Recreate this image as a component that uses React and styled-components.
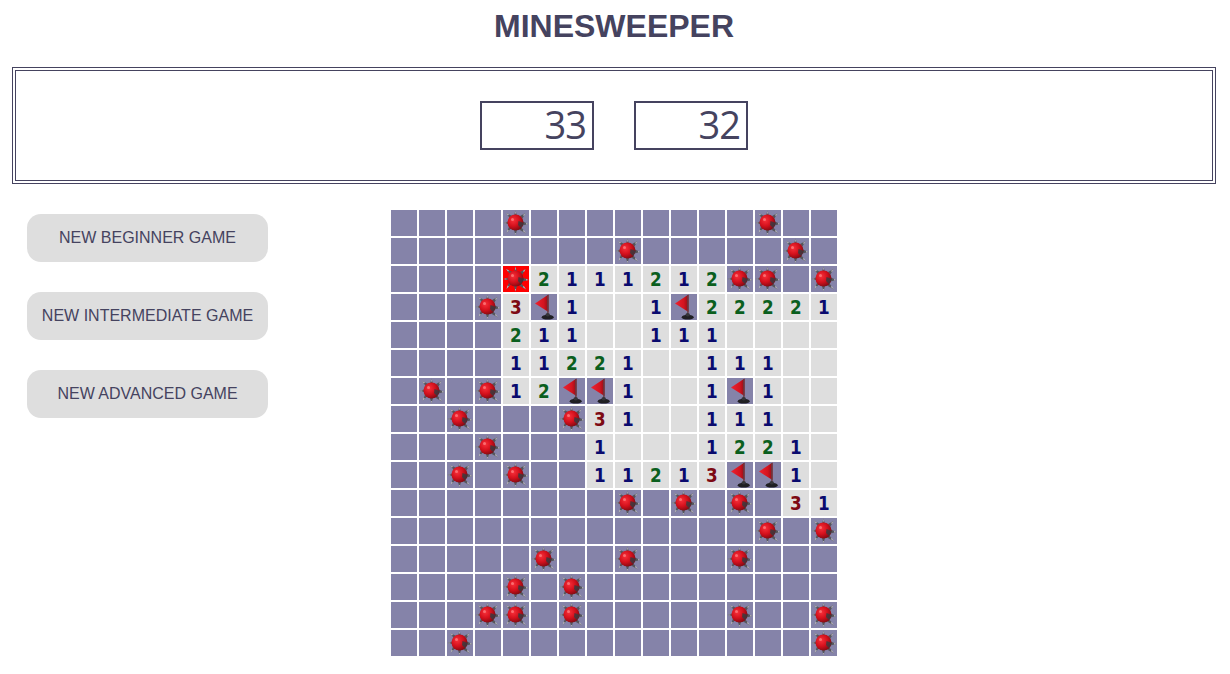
import styled, { createGlobalStyle } from 'styled-components';

const INK = '#45435f';

const GlobalStyle = createGlobalStyle`
  html, body {
    margin: 0;
    background: #fff;
    font-family: "Liberation Sans", Arial, sans-serif;
    color: ${INK};
  }
`;

const Page = styled.div`
  width: 1230px;
  height: 674px;
  overflow: hidden;
  padding: 0 14px 0 12px;
  box-sizing: border-box;
`;

const Title = styled.h1`
  margin: 0;
  height: 67px;
  padding-top: 8px;
  box-sizing: border-box;
  font-size: 32px;
  line-height: 37px;
  font-weight: bold;
  text-align: center;
  text-transform: uppercase;
`;

const ScoreBoard = styled.div`
  height: 117px;
  box-sizing: border-box;
  border: 4px double ${INK};
  display: flex;
  align-items: flex-start;
  justify-content: center;
  gap: 40px;
  padding-top: 30px;
`;

const Counter = styled.div`
  width: 114px;
  height: 49px;
  box-sizing: border-box;
  border: 2px solid ${INK};
  padding-right: 6px;
  font-family: "Open Sans", sans-serif;
  font-size: 38px;
  letter-spacing: -1px;
  line-height: 43px;
  text-align: right;
`;

const Main = styled.div`
  display: flex;
  padding: 26px 0 0 15px;
`;

const Sidebar = styled.div`
  width: 241px;
  padding-top: 4px;
  display: flex;
  flex-direction: column;
  gap: 30px;
`;

const GameButton = styled.button`
  height: 48px;
  border: 0;
  padding: 0;
  border-radius: 14px;
  background: #dedede;
  color: ${INK};
  font-family: inherit;
  font-size: 16px;
  text-transform: uppercase;
`;

const Board = styled.div`
  margin-left: 123px;
  display: grid;
  grid-template-columns: repeat(16, 26px);
  grid-auto-rows: 26px;
  gap: 2px;
`;

const numberColors = { 1: '#0a0a6e', 2: '#0b5f1e', 3: '#7d0a14' };

const Cell = styled.div`
  display: flex;
  align-items: center;
  justify-content: center;
  background: ${({ $kind }) =>
    $kind === 'exploded' ? '#fe0000' : $kind === 'open' ? '#dedede' : '#8583a9'};
`;

const Digit = styled.span`
  display: inline-block;
  transform: scaleX(0.84);
  color: ${({ $value }) => numberColors[$value] || INK};
  font-family: "DejaVu Sans", sans-serif;
  font-size: 20px;
  font-weight: bold;
  line-height: 26px;
`;

const Mine = () => (
  <svg width="26" height="26" viewBox="0 0 26 26">
    <defs>
      <radialGradient id="mineBall" cx="0.36" cy="0.36" r="0.75">
        <stop offset="0" stopColor="#f8303a" />
        <stop offset="0.5" stopColor="#d3101c" />
        <stop offset="1" stopColor="#6e0a12" />
      </radialGradient>
    </defs>
    <g fill="#55555b">
      <path d="M11 6 L12.5 0.5 L14 6z" />
      <path d="M17 6 L22.5 3 L19.5 8.5z" />
      <path d="M20 11.5 L25.5 14 L19.5 15.5z" />
      <path d="M18.5 17.5 L23 23.5 L16 19.5z" />
      <path d="M14 20 L12.5 25.5 L11 20z" />
      <path d="M8 18.5 L3.5 23 L6 16.5z" />
      <path d="M6.5 14.5 L0.5 13 L6.5 11z" />
      <path d="M7 8.5 L3 3 L9.5 6z" />
    </g>
    <g fill="#bdbdc2">
      <path d="M12 3.5 L12.5 0.5 L13 3.5z" />
      <path d="M20 5 L22.5 3 L21 6z" />
      <path d="M23 13 L25.5 14 L23 14.6z" />
      <path d="M20.8 20 L23 23.5 L19.8 21z" />
      <path d="M13 23 L12.5 25.5 L12 23z" />
      <path d="M5.8 20.4 L3.5 23 L4.6 19.6z" />
      <path d="M3.4 13.6 L0.5 13 L3.4 12.4z" />
      <path d="M5 5.4 L3 3 L6 4.4z" />
    </g>
    <circle cx="12.5" cy="12.5" r="8" fill="url(#mineBall)" />
    <path d="M15.5 11 L21 13 L18 18 L15 15z" fill="#3a3a40" opacity="0.85" />
    <circle cx="9.5" cy="9.5" r="1.5" fill="#ff8a8a" opacity="0.7" />
  </svg>
);

const Flag = () => (
  <svg width="26" height="26" viewBox="0 0 26 26">
    <defs>
      <linearGradient id="flagCloth" x1="0" y1="0" x2="1" y2="0">
        <stop offset="0" stopColor="#ee2230" />
        <stop offset="0.65" stopColor="#d4141f" />
        <stop offset="1" stopColor="#8e0e18" />
      </linearGradient>
    </defs>
    <path d="M17.5 0.5 L4 9.5 L17.5 18z" fill="url(#flagCloth)" />
    <rect x="16.2" y="1" width="1.4" height="20" fill="#6a3a40" />
    <ellipse cx="16.7" cy="23.2" rx="6" ry="2.4" fill="#1f1f23" />
    <ellipse cx="16.7" cy="20.8" rx="2.2" ry="1.8" fill="#35353a" />
  </svg>
);

// one string per row: # hidden, * mine, X hit mine, F flag, . open, digits
const rows = [
  '####*########*##',
  '########*#####*#',
  '####X2111212**#*',
  '###*3F1..1F22221',
  '####211..111....',
  '####11221..111..',
  '#*#*12FF1..1F1..',
  '##*###*31..111..',
  '###*###1...1221.',
  '##*#*##11213FF1.',
  '########*#*#*#31',
  '#############*#*',
  '#####*##*###*###',
  '####*#*#########',
  '###**#*#####*##*',
  '##*############*',
];

const renderCell = (ch, key) => {
  if (ch === '*') return <Cell key={key}><Mine /></Cell>;
  if (ch === 'X') return <Cell key={key} $kind="exploded"><Mine /></Cell>;
  if (ch === 'F') return <Cell key={key}><Flag /></Cell>;
  if (ch === '#') return <Cell key={key} />;
  if (ch === '.') return <Cell key={key} $kind="open" />;
  return <Cell key={key} $kind="open"><Digit $value={ch}>{ch}</Digit></Cell>;
};

export default function App() {
  return (
    <Page>
      <GlobalStyle />
      <Title>Minesweeper</Title>
      <ScoreBoard>
        <Counter>33</Counter>
        <Counter>32</Counter>
      </ScoreBoard>
      <Main>
        <Sidebar>
          <GameButton>New beginner game</GameButton>
          <GameButton>New intermediate game</GameButton>
          <GameButton>New advanced game</GameButton>
        </Sidebar>
        <Board>
          {rows.map((row, r) =>
            row.split('').map((ch, c) => renderCell(ch, `${r}-${c}`))
          )}
        </Board>
      </Main>
    </Page>
  );
}
